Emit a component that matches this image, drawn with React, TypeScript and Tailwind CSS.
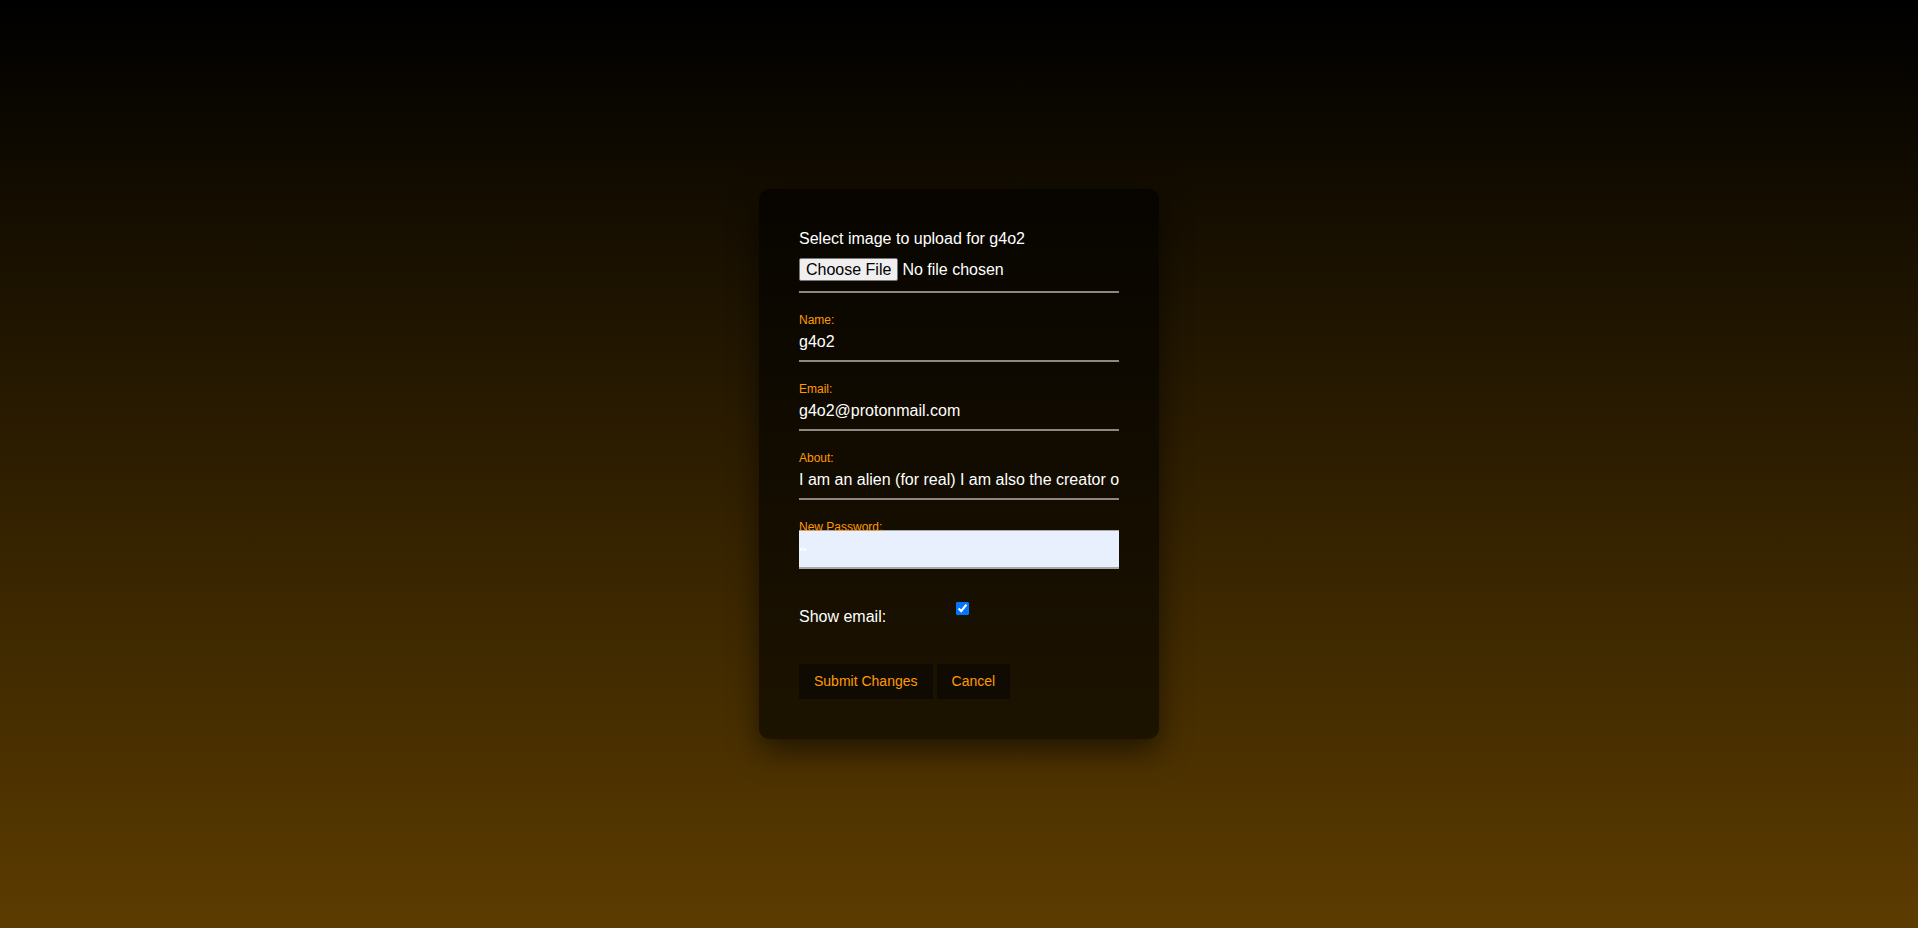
import React from 'react';

const fields = [
  { id: 'name', label: 'Name:', value: 'g4o2' },
  { id: 'email', label: 'Email:', value: 'g4o2@protonmail.com' },
  { id: 'about', label: 'About:', value: 'I am an alien (for real) I am also the creator of this website' },
];

export default function App() {
  return (
    <div
      className="h-[928px] w-full flex items-center justify-center bg-[linear-gradient(to_bottom,#000000,#5c3c00)]"
      style={{ fontFamily: '"Liberation Sans", Arial, sans-serif' }}
    >
      <form className="w-[400px] px-[40px] py-[40px] rounded-[10px] bg-black/60 shadow-[0_12px_30px_rgba(0,0,0,0.55)]">
        {/* Upload */}
        <div className="pb-[10px] border-b-2 border-[#8d8882]">
          <div className="text-white text-[16px] leading-[19px]">Select image to upload for g4o2</div>
          <div className="mt-[10px] flex items-center h-[23px]">
            <button
              type="button"
              className="h-[23px] px-[6px] bg-[#efefef] border border-[#767676] rounded-[2px] text-black text-[16px] leading-[18px]"
            >
              Choose File
            </button>
            <span className="ml-[4px] text-white text-[16px]">No file chosen</span>
          </div>
        </div>

        {/* Text fields */}
        {fields.map((f) => (
          <div key={f.id} className="pt-[20px] pb-[9px] border-b-2 border-[#8d8882]">
            <label className="block text-[#ff9a00] text-[12px] leading-[14px]">{f.label}</label>
            <input
              type="text"
              defaultValue={f.value}
              className="mt-[6px] block w-full bg-transparent text-white text-[16px] leading-[18px] h-[18px] outline-none"
            />
          </div>
        ))}

        {/* Password */}
        <div className="pt-[20px]">
          <label className="relative z-10 block text-[#ff9a00] text-[12px] leading-[14px]">New Password:</label>
          <input
            type="password"
            defaultValue="ab"
            className="-mt-[4px] block w-full h-[39px] bg-[#e8f0fe] border-t border-b-2 border-[#a8a8a8] text-white text-[11px] px-0 outline-none"
          />
        </div>

        {/* Show email */}
        <div className="mt-[33px] flex items-start">
          <span className="w-[157px] pt-[6px] text-white text-[16px] leading-[18px]">Show email:</span>
          <input type="checkbox" defaultChecked className="w-[13px] h-[13px] m-0" />
        </div>

        {/* Actions */}
        <div className="mt-[38px] flex gap-[4px]">
          <button type="button" className="h-[35px] px-[15px] bg-[#100b02] text-[#ff9a00] text-[14px]">
            Submit Changes
          </button>
          <button type="button" className="h-[35px] px-[15px] bg-[#100b02] text-[#ff9a00] text-[14px]">
            Cancel
          </button>
        </div>
      </form>
    </div>
  );
}
